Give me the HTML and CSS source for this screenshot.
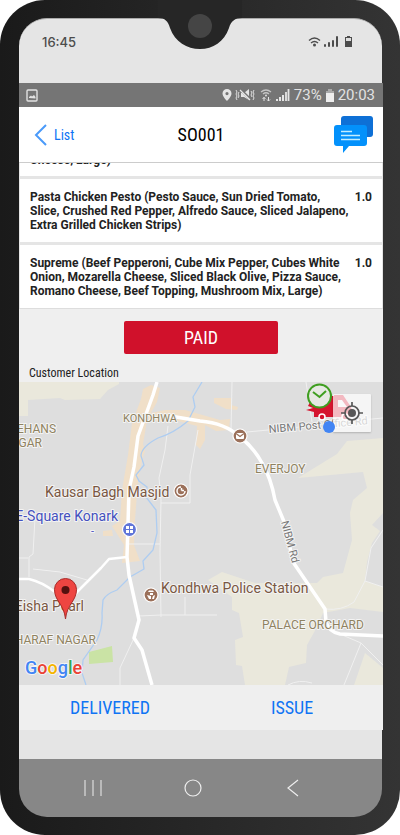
FILE: index.html
```html
<!DOCTYPE html>
<html lang="en">
<head>
<meta charset="utf-8">
<meta name="viewport" content="width=device-width, initial-scale=1">
<title>SO001</title>
<link rel="stylesheet" href="styles.css">
</head>
<body>
<div class="phone">
  <svg class="notch" width="84" height="50" viewBox="0 0 84 50" aria-hidden="true">
    <path d="M0 0V18C7 18 10 21 12 28C17 42 29 49 42 49S66 42 71 28C73 21 77 18 84 18V0Z" fill="#262626"/>
    <circle cx="42" cy="26" r="12" fill="#454545"/>
  </svg>
  <header class="system-bar">
    <time>16:45</time>
    <svg width="46" height="14" viewBox="0 0 46 14" aria-hidden="true">
      <g fill="none" stroke="#4c4c4c" stroke-width="1.400"><path d="M1 5.500Q6.500 0.500 12 5.500M3 8Q6.500 5 10 8"/></g>
      <circle cx="6.500" cy="10" r="1.500" fill="#4c4c4c"/>
      <path d="M17 11v-1M21 11V8M25 11V6M29 11V2" stroke="#4c4c4c" stroke-width="2" stroke-linecap="round"/>
      <path d="M39 1h3v1h2v10h-7V2h2z" fill="#4c4c4c"/><path d="M38 3h5v3h-5z" fill="#ddd"/>
    </svg>
  </header>

  <div class="app">
    <div class="status">
      <svg width="12" height="13" viewBox="0 0 12 13" aria-hidden="true"><rect x="1" y="1" width="10" height="11" rx="1" fill="none" stroke="#e2e2e2" stroke-width="1.400"/><path d="M3 9V8l2-1.500 1 1L8 6l1.500 2v1.500z" fill="#e2e2e2"/></svg>
      <div class="status-right">
        <svg width="68" height="14" viewBox="0 0 68 14" aria-hidden="true">
          <path fill="#e5e5e5" fill-rule="evenodd" d="M5 1a4.500 4.500 0 0 1 4.500 4.500C9.500 8.500 5 13 5 13S.5 8.500.5 5.500A4.500 4.500 0 0 1 5 1zm0 3a1.600 1.600 0 1 0 0 3.200A1.600 1.600 0 0 0 5 4z"/>
          <path fill="#e5e5e5" d="M19 5h3l5-4v11l-5-3h-3z"/>
          <path d="M19 2l10 10" stroke="#757575" stroke-width="2.500"/><path d="M18 2l10 10" stroke="#e5e5e5" stroke-width="1.300"/>
          <path d="M14 2l1 2-1 2 1 2-1 2 1 2M17 4l-1 2 1 2-1 2M29 3l1 2-1 2 1 2M32 2l-1 2 1 2-1 2 1 2-1 2" fill="none" stroke="#ddd"/>
          <path d="M39 4q5-4 10 0M41 6q3-2.500 6 0" fill="none" stroke="#c5c5c5" stroke-width="1.300"/><circle cx="44" cy="7.500" r="1" fill="#ddd"/>
          <path d="M42 9v4M40.500 11L42 9.500 43.500 11M46.500 9v4M45 11.500l1.500 1.500 1.500-1.500" stroke="#e5e5e5" fill="none"/>
          <path d="M55 13v-2M58 13V9M61 13V7" stroke="#e5e5e5" stroke-width="2"/><path d="M64 13V4M66.500 13V1" stroke="#e5e5e5" stroke-width="1.800"/>
        </svg>
        <span>73%</span>
        <svg width="8" height="13" viewBox="0 0 8 13" aria-hidden="true"><path d="M2 0h4v2h2v11H0V2h2z" fill="#eee"/><path d="M2 0h4v2h2v2H0V2h2z" fill="#aaa"/></svg>
        <span>20:03</span>
      </div>
    </div>

    <nav class="title-bar">
      <a class="back" href="#list">
        <svg width="13" height="24" viewBox="0 0 13 24" aria-hidden="true"><path d="M12 2L2 12l10 10" fill="none" stroke="#4a9afa" stroke-width="2"/></svg>
        List
      </a>
      <h1>SO001</h1>
      <button class="chat" type="button" aria-label="Messages">
        <svg width="40" height="38" viewBox="0 0 40 38" aria-hidden="true">
          <rect x="7" y="0" width="32" height="21" rx="3" fill="#0e70d6"/>
          <path d="M3 9h27q3 0 3 3v15q0 3-3 3H15l-6 7v-7H3q-3 0-3-3V12q0-3 3-3z" fill="#0391fb"/>
          <path d="M7 15.500h11M7 19.500h19M7 23.500h19" stroke="#c3edff" stroke-width="1.500"/>
        </svg>
      </button>
    </nav>

    <ul class="items">
      <li class="item cut"><p>Cheese, Large)</p></li>
      <li class="item"><p>Pasta Chicken Pesto (Pesto Sauce, Sun Dried Tomato,<br>Slice, Crushed Red Pepper, Alfredo Sauce, Sliced Jalapeno,<br>Extra Grilled Chicken Strips)</p><span class="qty">1.0</span></li>
      <li class="item"><p>Supreme (Beef Pepperoni, Cube Mix Pepper, Cubes White Onion, Mozarella Cheese, Sliced Black Olive, Pizza Sauce, Romano Cheese, Beef Topping, Mushroom Mix, Large)</p><span class="qty">1.0</span></li>
    </ul>

    <div class="payment"><button class="paid" type="button">PAID</button></div>
    <h2>Customer Location</h2>

    <div class="map">
      <svg class="map-art" viewBox="19 382 364 303" preserveAspectRatio="xMidYMid slice" role="img" aria-label="Map of customer location">
        <rect x="19" y="382" width="364" height="303" fill="#dedede"/>
        <g fill="#eae8dc">
          <path d="M19 382H119V384L108 390 100 399 65 400 60 398 28 400V416H19Z"/>
          <path d="M383 438L347 441 337 454 298 478 363 472 367 488 353 500 350 513 352 540 343 573 323 577 317 583H255L222 572 208 580 232 597V610L239 613 243 637 235 640 236 665 242 666 245 685H285L289 667 306 663 307 645 317 627 323 613 350 608 383 612V587L365 581 367 562 372 543 380 531 372 525 383 513Z"/>
          <path d="M354 685L365 653 383 668V685Z"/>
        </g>
        <path d="M89 652L112 646 113 662 89 664Z" fill="#cae3a5"/>
        <g fill="#f0dfc8">
          <path d="M143 389L151 385 160 388 157 402 151 413 165 410 185 410 220 420 230 419 229 430 216 431 205 425 205 440 200 449 196 445 197 426 178 421 147 421 143 444 145 451 142 460 138 480 135 520 134 545 140 561 122 563 124 545 112 526 120 521 122 490 128 455 132 423 141 399Z"/>
          <path d="M214 398H231V405L238 407 237 410 226 409 214 403ZM103 531L112 530 113 536 103 536Z"/>
        </g>
        <g fill="none" stroke="#f0f0f0" stroke-width="1">
          <path d="M232 382L231 431M306 382L312 422M247 432L300 427 340 422 383 418M168 426L165 450 159 478 161 500 160 552 161 617M198 430L190 475 190 503 161 503M129 544H160M35 518L33 554 29 557 29 577M19 558H28M33 569L60 572 87 580M139 616L161 615H217M185 597V615M134 638L120 668V685M383 530L371 548 365 581 354 602Q342 611 325 609M365 581L383 587M340 634L361 643 383 665M361 643L344 685M288 685Q299 679 312 683"/>
        </g>
        <path d="M202 382L193 397 195 407 188 421Q174 433 158 438Q141 447 141 456L144 465 136 475 139 481 147 487 146 497 156 510 157 533 153 550 143 561 144 569 130 577 117 590Q106 594 103 600L102 613Q103 627 97 640L83 660 82 673 86 685" fill="none" stroke="#aecdf1" stroke-width="1.300"/>
        <g fill="none" stroke="#fff" stroke-width="3.500" stroke-linejoin="round">
          <path d="M157 382L153 395 138 436 134 467 129 490 127 557 129 575 139 620 134 638 142 650 152 685"/>
          <path d="M170 416L200 421Q225 423 240 437Q254 448 262 463Q271 478 275 500L285 524 293 562 325 609 326 622Q329 632 340 634L383 636"/>
          <path d="M19 579H29Q42 582 55 592L68 604 78 591 101 568 109 559 127 557" stroke-width="2.500"/>
        </g>

        <g class="area">
          <text x="123" y="422" class="label-small">KONDHWA</text>
          <text x="56" y="433" text-anchor="end">EHANS</text>
          <text x="42" y="447" text-anchor="end">GAR</text>
          <text x="255" y="473">EVERJOY</text>
          <text x="262" y="629">PALACE ORCHARD</text>
          <text x="96" y="644" text-anchor="end">HARAF NAGAR</text>
        </g>
        <g class="place">
          <text x="45" y="497">Kausar Bagh Masjid</text>
          <text x="84" y="611" text-anchor="end">Eisha Pearl</text>
          <text x="161" y="593">Kondhwa Police Station</text>
          <text x="118" y="521" text-anchor="end" class="transit">E-Square Konark</text>
          <text x="91" y="535" class="transit label-small">-</text>
        </g>
        <g class="street">
          <text transform="translate(269 433) rotate(-5)">NIBM Post Office Rd</text>
          <text transform="translate(281 522) rotate(75)">NIBM Rd</text>
        </g>

        <g stroke="#fff" stroke-width="1.200">
          <circle cx="181" cy="491" r="7" fill="#9b705a"/><circle cx="240" cy="436" r="7" fill="#9b705a"/>
          <circle cx="151" cy="595" r="7" fill="#9b705a"/><circle cx="129.500" cy="529.500" r="7" fill="#6075d8"/>
        </g>
        <path d="M181 487a4 4 0 1 0 4 4M181.500 490.500v-2.500M181.500 490.500h2.500" fill="none" stroke="#fff" stroke-width="1.500"/>
        <rect x="236" y="433" width="8" height="6" rx="1" fill="#fff"/><path d="M236 433.500l4 3 4-3" fill="none" stroke="#9b705a" stroke-width="1.200"/>
        <path d="M149 590.500h4l1 1.500h-6zM150 593h3v2h-3zM147 595l4 1v3h-2zM155 595l-1 4h-2l1-3z" fill="#fff"/>
        <path d="M126 526h3v3h-3zM130 526h3v3h-3zM126 530h3v3h-3zM130 530h3v3h-3z" fill="#fff"/>

        <path d="M65.500 619C64 604 54.500 601 54.500 589.500A11 11 0 0 1 76.500 589.500C76.500 601 67 604 65.500 619Z" fill="#ee4541" stroke="#a82c2a"/>
        <circle cx="65.500" cy="590" r="4" fill="#53110f"/>

        <text class="brand" x="25" y="674"><tspan fill="#4285f4">G</tspan><tspan fill="#ea4335">o</tspan><tspan fill="#f4b400">o</tspan><tspan fill="#4285f4">g</tspan><tspan fill="#34a853">l</tspan><tspan fill="#ea4335">e</tspan></text>

        <path d="M313 396H334V417H314V412L306 410 313 408 308 406Z" fill="#d5152f"/>
        <path d="M334 395V417H349Q354 416 351 407L343 395Z" fill="#d5152f"/>
        <path d="M338 400h4l5 7h-9z" fill="#eee"/>
        <circle cx="322" cy="417" r="3" fill="#d5152f" stroke="#fff" stroke-width="1.500"/>
        <circle cx="345" cy="417" r="3" fill="#d5152f" stroke="#fff" stroke-width="1.500"/>
        <circle cx="319.500" cy="396" r="11.500" fill="#e6e9e3" stroke="#3f9e20" stroke-width="2"/>
        <path d="M313 392l6.500 5 6.500-6" fill="none" stroke="#3f9e20" stroke-width="2"/>
      </svg>
      <button class="locate" type="button" aria-label="My location">
        <svg width="22" height="22" viewBox="0 0 22 22" aria-hidden="true"><g fill="none" stroke="#575757" stroke-width="1.700"><circle cx="11" cy="11" r="7"/><path d="M11 0v4M11 18v4M0 11h4M18 11h4"/></g><circle cx="11" cy="11" r="4" fill="#575757"/></svg>
      </button>
      <span class="position-dot"></span>
    </div>

    <div class="actions">
      <button type="button">DELIVERED</button>
      <button type="button">ISSUE</button>
    </div>
  </div>

  <footer class="system-nav">
    <button type="button" aria-label="Recent apps"><svg width="20" height="18" viewBox="0 0 20 18"><path d="M2 1v16M10 1v16M18 1v16" stroke="#ddd" stroke-width="1.200"/></svg></button>
    <button type="button" aria-label="Home"><svg width="18" height="18" viewBox="0 0 18 18"><circle cx="9" cy="9" r="8" fill="none" stroke="#eee" stroke-width="1.200"/></svg></button>
    <button type="button" aria-label="Back"><svg width="12" height="18" viewBox="0 0 12 18"><path d="M11 1L1 9l10 8" fill="none" stroke="#eee" stroke-width="1.200"/></svg></button>
  </footer>
</div>
</body>
</html>
```
FILE: styles.css
```css
* { box-sizing: border-box; }

body {
  margin: 0;
  background: #fff;
  color: #222;
  font-family: Roboto, "Liberation Sans", sans-serif;
}

button {
  margin: 0;
  padding: 0;
  border: 0;
  background: none;
  color: inherit;
  cursor: pointer;
}

svg { display: block; }

.phone {
  position: relative;
  display: flex;
  flex-direction: column;
  min-height: 100vh;
  padding: 18px 17px 18px 19px;
  border-radius: 45px;
  background: linear-gradient(90deg, #1a1a1a, #343434);
}

.notch {
  position: absolute;
  top: 0;
  left: 50%;
  transform: translateX(-50%);
}

.system-bar {
  display: flex;
  justify-content: space-between;
  height: 65px;
  margin-right: 1px;
  padding: 16px 28px 0 23px;
  border-top: 1px solid #aaa;
  border-radius: 28px 28px 0 0;
  background: #e5e5e5;
  color: #4c4c4c;
  font: 500 13px/14px Inter, sans-serif;
}

.app {
  background: #efefef;
  font-family: "Roboto Condensed", Roboto, sans-serif;
}

.status {
  display: flex;
  align-items: center;
  justify-content: space-between;
  height: 24px;
  padding: 0 8px 0 7px;
  background: #757575;
  color: #e2e2e2;
  font: 15px/24px Roboto, sans-serif;
}

.status-right {
  display: flex;
  align-items: center;
  gap: 4px;
}

.title-bar {
  display: grid;
  grid-template-columns: 1fr auto 1fr;
  align-items: center;
  height: 56px;
  padding: 0 9px 0 15px;
  border-bottom: 1px solid #ccc;
  background: #fff;
}

.back {
  display: flex;
  align-items: center;
  gap: 7px;
  color: #0f74f4;
  font-size: 14px;
  text-decoration: none;
}

h1 {
  margin: 0;
  padding-right: 6px;
  color: #000;
  font-size: 18px;
  font-weight: 400;
}

.chat { justify-self: end; }

.items {
  display: flex;
  flex-direction: column;
  gap: 3px;
  margin: 0;
  padding: 0 1px;
  border-bottom: 1px solid #ddd;
  background: #e5e5e5;
  list-style: none;
}

.item {
  display: flex;
  justify-content: space-between;
  height: 63px;
  padding: 11px 10px 0 10px;
  background: #fff;
  font: 700 12px/14px Roboto, sans-serif;
}

.item p {
  max-width: 326px;
  margin: 0;
}

.qty { flex: none; }

.cut {
  align-items: flex-end;
  height: 13px;
  padding-top: 0;
  padding-bottom: 9px;
  overflow: hidden;
}

.payment {
  display: flex;
  justify-content: center;
  padding: 12px 0 11px;
}

.paid {
  width: 154px;
  height: 33px;
  border-radius: 2px;
  background: #d0112b;
  color: #fff;
  font: 18px/33px "Roboto Condensed", Roboto, sans-serif;
}

h2 {
  margin: 0;
  padding: 0 10px;
  font-size: 12px;
  font-weight: 400;
  line-height: 17px;
}

.map {
  position: relative;
  overflow: hidden;
}

.map-art {
  width: 100%;
  height: auto;
}

.map-art text {
  paint-order: stroke;
  stroke: #f4f4f4;
  stroke-width: 2px;
  stroke-linejoin: round;
}

.area {
  fill: #8f8260;
  font-size: 12px;
  font-family: Roboto, sans-serif;
}

.label-small { font-size: 11px; }

.place {
  fill: #795742;
  font-size: 14px;
  font-family: Roboto, sans-serif;
}

.place .transit { fill: #4451be; }

.street {
  fill: #777;
  font-size: 11px;
  font-family: Roboto, sans-serif;
}

.brand {
  font: 500 18px Roboto, sans-serif;
}

.locate {
  position: absolute;
  top: 12px;
  right: 12px;
  display: grid;
  place-items: center;
  width: 38px;
  height: 38px;
  border-radius: 1px;
  background: rgb(255 255 255 / 70%);
  box-shadow: 0 1px 2px rgb(0 0 0 / 20%);
}

.position-dot {
  position: absolute;
  top: 39px;
  right: 48px;
  width: 12px;
  height: 12px;
  border-radius: 50%;
  background: #4285f4;
}

.actions {
  display: grid;
  grid-template-columns: 1fr 1fr;
}

.actions button {
  height: 45px;
  color: #0f74f4;
  font: 18px/45px "Roboto Condensed", Roboto, sans-serif;
}

.system-nav {
  display: grid;
  flex: 1;
  grid-template-columns: repeat(3, 100px);
  justify-content: center;
  align-items: center;
  margin-right: 1px;
  padding-right: 16px;
  border-top: 29px solid #e5e5e5;
  border-radius: 0 0 28px 28px;
  background: #878787;
}

.system-nav button {
  display: grid;
  place-items: center;
}
```
